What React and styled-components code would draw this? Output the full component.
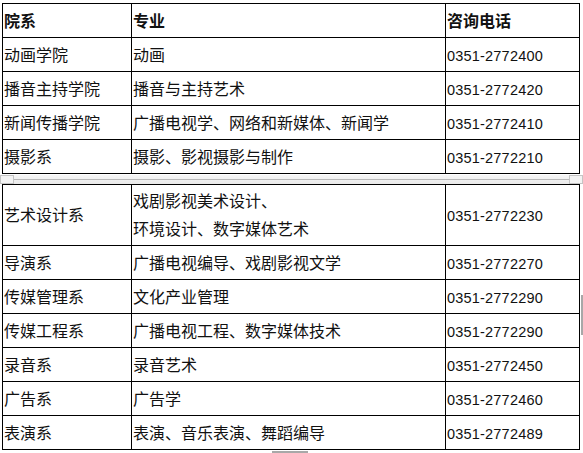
import React from 'react'
import styled, { createGlobalStyle } from 'styled-components'

const GlobalStyle = createGlobalStyle`
  body {
    margin: 0;
    background: #fff;
    font-family: "Liberation Sans", "Noto Sans CJK SC", sans-serif;
    color: #111;
  }
`

const topRows = [
  ['动画学院', '动画', '0351-2772400'],
  ['播音主持学院', '播音与主持艺术', '0351-2772420'],
  ['新闻传播学院', '广播电视学、网络和新媒体、新闻学', '0351-2772410'],
  ['摄影系', '摄影、影视摄影与制作', '0351-2772210'],
]

const bottomRows = [
  ['导演系', '广播电视编导、戏剧影视文学', '0351-2772270'],
  ['传媒管理系', '文化产业管理', '0351-2772290'],
  ['传媒工程系', '广播电视工程、数字媒体技术', '0351-2772290'],
  ['录音系', '录音艺术', '0351-2772450'],
  ['广告系', '广告学', '0351-2772460'],
  ['表演系', '表演、音乐表演、舞蹈编导', '0351-2772489'],
]

export default function App() {
  return (
    <>
      <GlobalStyle />
      <Page>
        <Table>
          <colgroup>
            <col style={{ width: 129 }} />
            <col style={{ width: 314 }} />
            <col style={{ width: 134 }} />
          </colgroup>
          <tbody>
            <tr>
              <Cell $head>院系</Cell>
              <Cell $head>专业</Cell>
              <Cell $head>咨询电话</Cell>
            </tr>
            {topRows.map((r, i) => (
              <tr key={i}>
                <Cell>{r[0]}</Cell>
                <Cell>{r[1]}</Cell>
                <Phone>{r[2]}</Phone>
              </tr>
            ))}
          </tbody>
        </Table>

        <Band>
          <BandButton />
          <BandTrack />
          <BandButton />
        </Band>

        <Table>
          <colgroup>
            <col style={{ width: 129 }} />
            <col style={{ width: 314 }} />
            <col style={{ width: 134 }} />
          </colgroup>
          <tbody>
            <tr>
              <Cell $tall>艺术设计系</Cell>
              <Cell $tall $lines>
                戏剧影视美术设计、
                <br />
                环境设计、数字媒体艺术
              </Cell>
              <Phone $tall>0351-2772230</Phone>
            </tr>
            {bottomRows.map((r, i) => (
              <tr key={i}>
                <Cell>{r[0]}</Cell>
                <Cell>{r[1]}</Cell>
                <Phone>{r[2]}</Phone>
              </tr>
            ))}
          </tbody>
        </Table>

        <ThumbV />
        <ThumbH />
      </Page>
    </>
  )
}

const Page = styled.div`
  position: relative;
  width: 583px;
  height: 453px;
  overflow: hidden;
  box-sizing: border-box;
  padding: 3px 0 0 2px;
`

const Table = styled.table`
  border-collapse: collapse;
  table-layout: fixed;
  width: 577px;
`

const Cell = styled.td`
  border: 1px solid #000;
  height: ${(p) => (p.$tall ? '61px' : '34px')};
  padding: 2px 0 0 1px;
  box-sizing: border-box;
  font-size: 16px;
  line-height: ${(p) => (p.$lines ? '28px' : '20px')};
  font-weight: ${(p) => (p.$head ? 'bold' : 'normal')};
  vertical-align: middle;
  white-space: nowrap;
  overflow: hidden;
`

const Phone = styled(Cell)`
  font-size: 14.5px;
  letter-spacing: 0.2px;
`

const Band = styled.div`
  display: flex;
  margin: 1px 0 0 -2px;
  width: 583px;
  height: 9px;
  background: linear-gradient(#f6f6f6, #e9e9e9);
`

const BandButton = styled.div`
  width: 14px;
  box-sizing: border-box;
  border: 1px solid #c4c4c4;
  background: #f3f3f3;
`

const BandTrack = styled.div`
  flex: 1;
  background: linear-gradient(
    transparent 0,
    transparent 4px,
    #b8b8b8 4px,
    #b8b8b8 5px,
    transparent 5px
  );
`

const ThumbV = styled.div`
  position: absolute;
  right: 0;
  top: 295px;
  width: 2px;
  height: 40px;
  background: #a8a8a8;
`

const ThumbH = styled.div`
  position: absolute;
  left: 272px;
  bottom: 0;
  width: 36px;
  height: 2px;
  background: #a8a8a8;
`
